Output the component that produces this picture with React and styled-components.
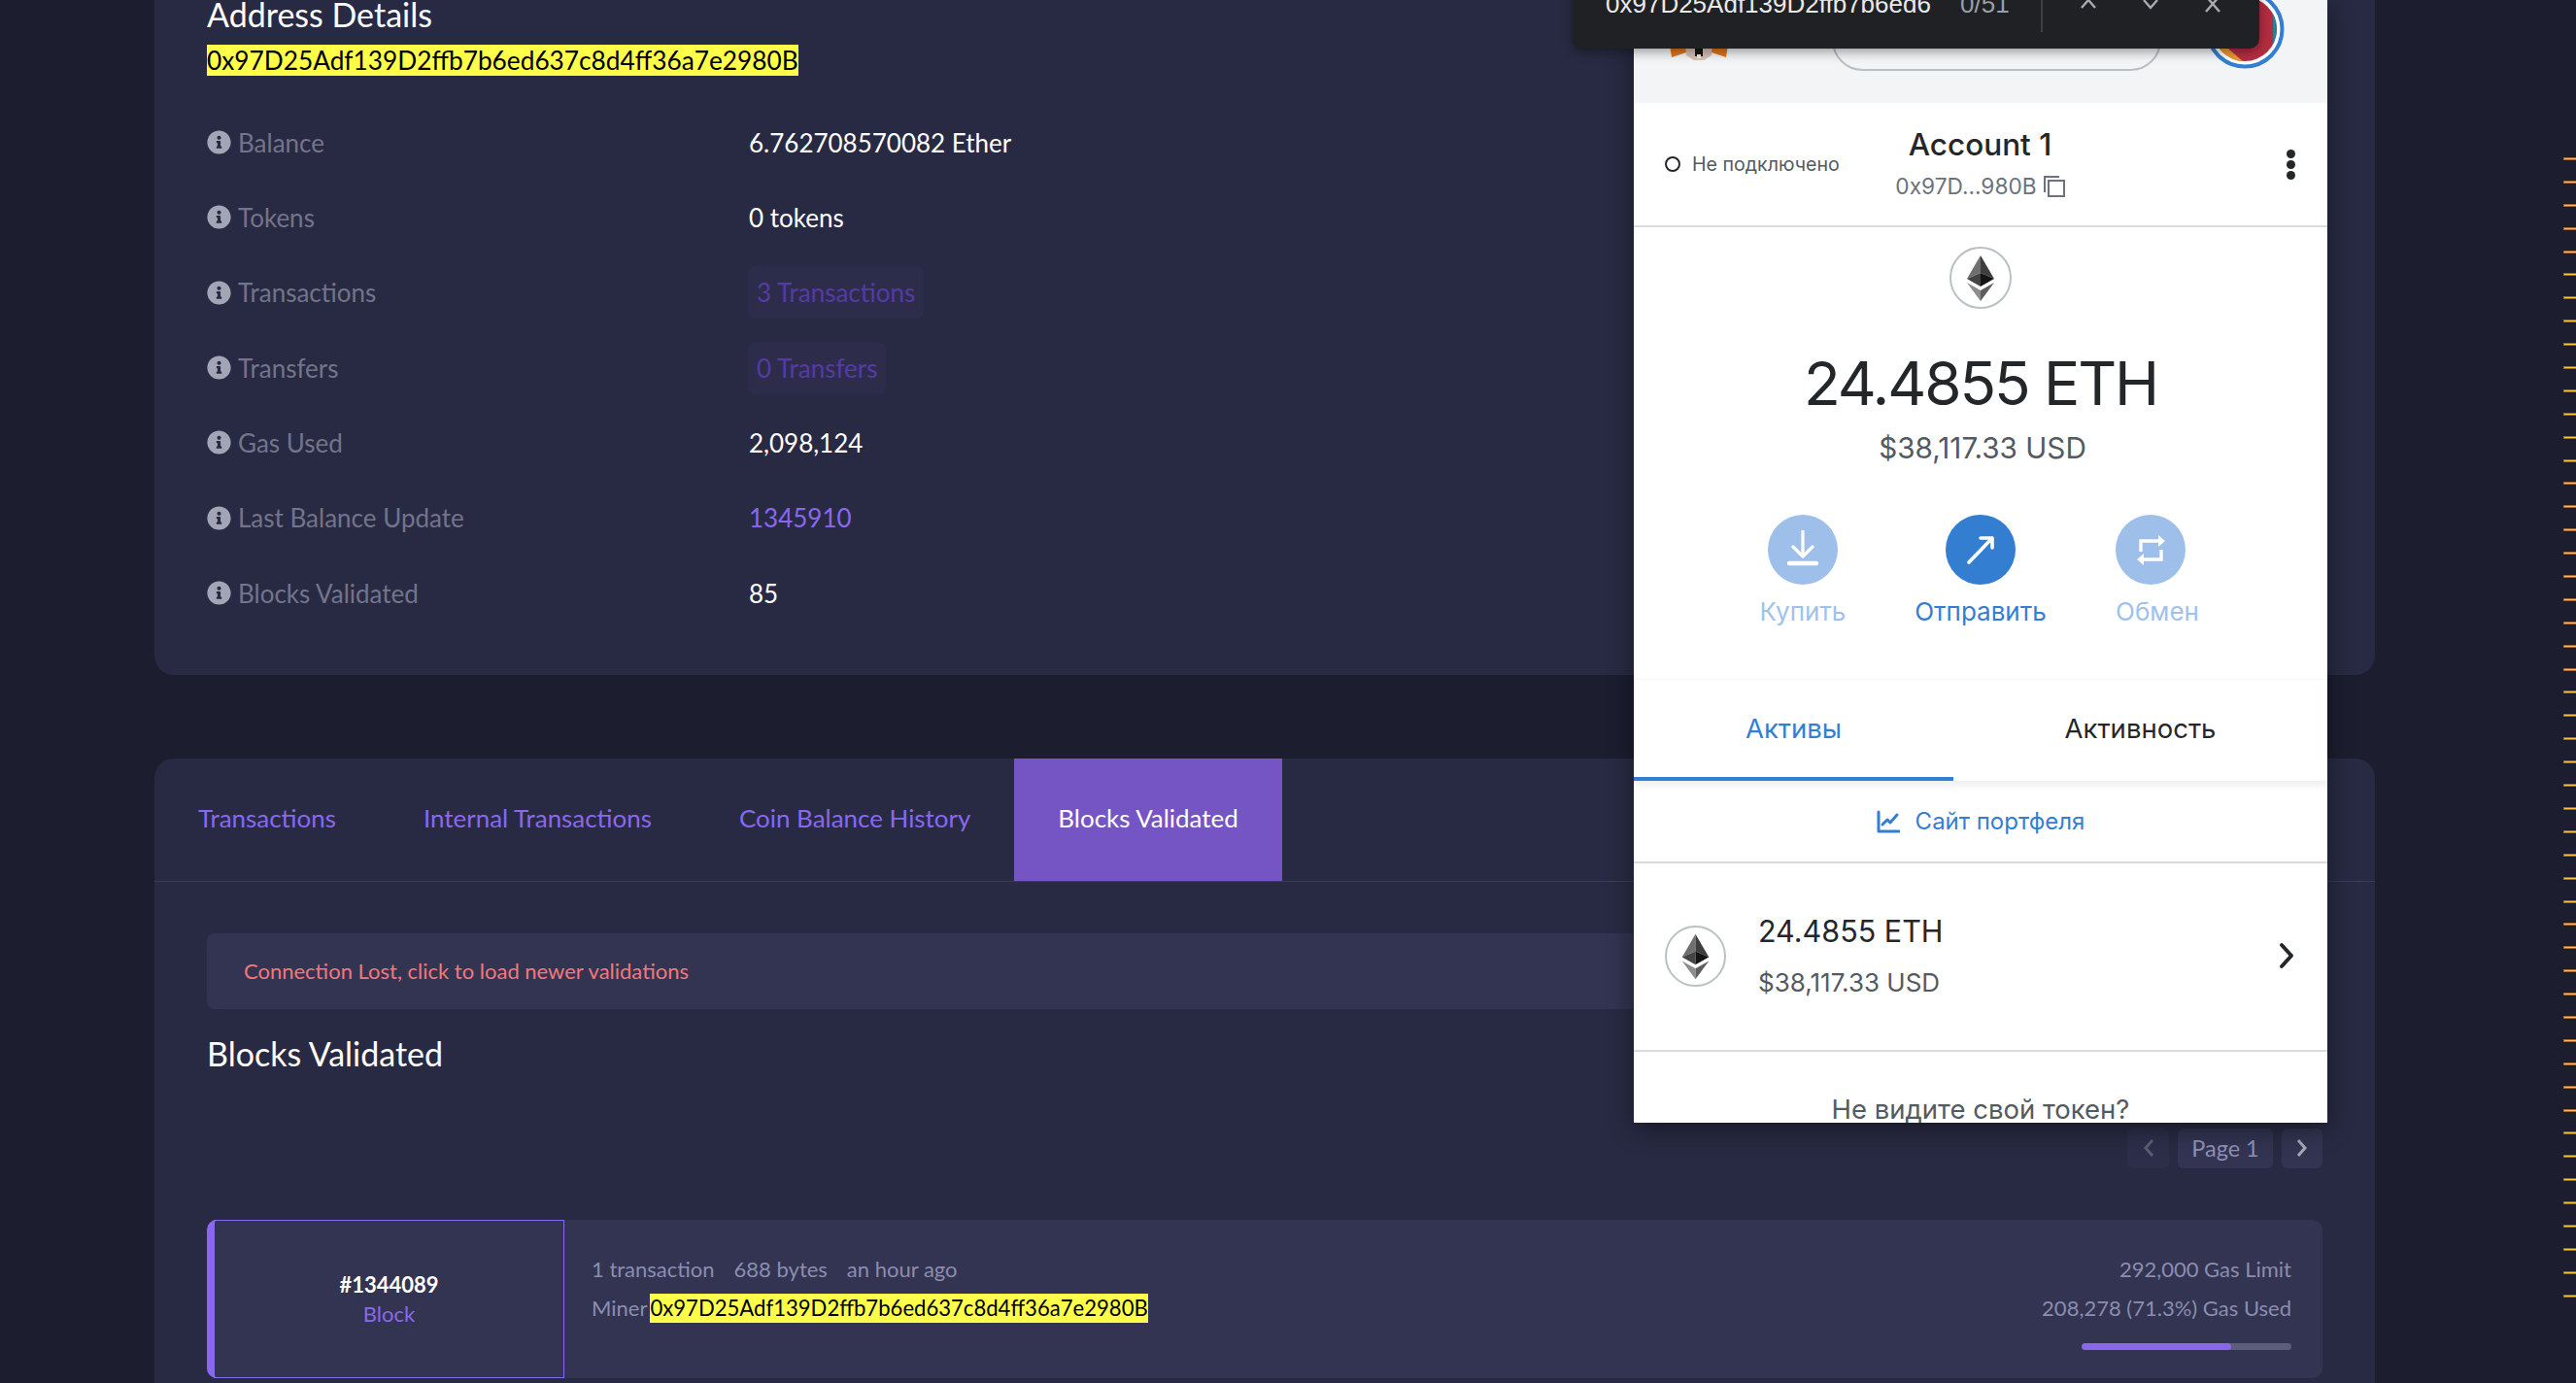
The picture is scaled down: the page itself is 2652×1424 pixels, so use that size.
import React from 'react';
import styled, { createGlobalStyle } from 'styled-components';
import { FaInfoCircle } from 'react-icons/fa';

const GlobalStyle = createGlobalStyle`
  html, body {
    margin: 0;
    height: 100%;
    background: #1c1d2f;
  }
  body {
    font-family: 'Lato', 'Noto Sans', sans-serif;
  }
`;

const Page = styled.div`
  position: relative;
  height: 1424px;
  overflow: hidden;
  padding: 0 207px 0 159px;
  box-sizing: border-box;
`;

const Card = styled.section`
  background: #282a43;
  border-radius: 20px;
`;

const DetailsCard = styled(Card)`
  margin-top: -40px;
  padding: 35px 54px 46px;
  border-radius: 0 0 20px 20px;
`;

const Heading = styled.h2`
  margin: 0;
  font-size: 34px;
  font-weight: 400;
  line-height: 40px;
  color: #fff;
`;

const Highlight = styled.mark`
  background: #ffff4a;
  color: #000;
  font-size: ${(p) => p.$size}px;
  line-height: ${(p) => p.$height}px;
  display: inline-block;
`;

const AddressLine = styled.div`
  margin: 11px 0 30px;
  height: 32px;
  line-height: 32px;
  display: flex;
`;

const Row = styled.div`
  display: grid;
  grid-template-columns: 558px 1fr;
  align-items: center;
  height: 77.33px;
  font-size: 26px;
`;

const Label = styled.div`
  display: flex;
  align-items: center;
  gap: 7px;
  color: #72748b;
  svg {
    color: #a3a5b6;
    width: 25px;
    height: 25px;
  }
`;

const Value = styled.div`
  color: ${(p) => (p.$link ? '#8a68ee' : '#fff')};
`;

const Pill = styled.span`
  display: inline-block;
  margin-left: -1px;
  padding: 0 9px;
  height: 54px;
  line-height: 54px;
  border-radius: 8px;
  background: #2d2d4b;
  color: #553aa3;
`;

const HistoryCard = styled(Card)`
  margin-top: 86px;
  height: 800px;
`;

const TabBar = styled.nav`
  display: flex;
  height: 126px;
  border-bottom: 1px solid #3b3d5a;
`;

const PageTab = styled.div`
  display: flex;
  align-items: center;
  padding: 0 45px 5px;
  font-size: 25.95px;
  color: ${(p) => (p.$active ? '#fff' : '#8a68ee')};
  background: ${(p) => (p.$active ? '#7554c4' : 'transparent')};
  border-radius: ${(p) => (p.$first ? '20px 0 0 0' : '0')};
`;

const HistoryBody = styled.div`
  padding: 53px 54px 0;
`;

const Alert = styled.div`
  display: flex;
  align-items: center;
  height: 78px;
  padding: 0 0 2px 38px;
  box-sizing: border-box;
  border-radius: 8px;
  background: #323451;
  color: #f4777c;
  font-size: 22px;
`;

const SectionTitle = styled(Heading)`
  margin-top: 26px;
`;

const Pagination = styled.div`
  display: flex;
  justify-content: flex-end;
  gap: 9px;
  margin-top: 57px;
  height: 41px;
`;

const PageBox = styled.div`
  display: flex;
  align-items: center;
  justify-content: center;
  width: ${(p) => p.$width}px;
  padding-bottom: 2px;
  border-radius: 6px;
  background: ${(p) => (p.$muted ? '#2d2e4a' : '#323451')};
  color: #8d90b8;
  font-size: 23.5px;
  svg {
    width: 14px;
    height: 22px;
    stroke: ${(p) => (p.$muted ? '#5b5d72' : '#a7a8b6')};
  }
`;

const BlockItem = styled.article`
  display: flex;
  margin-top: 53px;
  height: 163px;
  border-radius: 10px;
  background: #323451;
  border-left: 7px solid #8a68ee;
`;

const BlockTile = styled.div`
  display: flex;
  flex-direction: column;
  align-items: center;
  justify-content: center;
  gap: 8px;
  box-sizing: border-box;
  width: 361px;
  border: 1.5px solid #8a68ee;
  font-size: 22px;
  line-height: 22px;
`;

const BlockNumber = styled.div`
  color: #fff;
  font-weight: 700;
`;

const BlockKind = styled.div`
  color: #8a68ee;
`;

const BlockMain = styled.div`
  flex: 1;
  display: flex;
  justify-content: space-between;
  padding: 36px 32px 0 28px;
  font-size: 22px;
  color: #8b8db0;
`;

const MetaLine = styled.div`
  display: flex;
  gap: 20px;
  height: 30px;
  line-height: 30px;
`;

const MinerLine = styled.div`
  display: flex;
  gap: 3px;
  margin-top: 10px;
  height: 30px;
  line-height: 30px;
`;

const GasColumn = styled.div`
  display: flex;
  flex-direction: column;
  align-items: flex-end;
  gap: 10px;
  line-height: 30px;
`;

const GasBar = styled.div`
  width: 216px;
  height: 7px;
  margin-top: 11px;
  border-radius: 4px;
  background: #5c5e79;
  overflow: hidden;
`;

const GasFill = styled.div`
  height: 100%;
  border-radius: 4px;
  background: #8a68ee;
`;

const FindBar = styled.div`
  position: absolute;
  z-index: 3;
  top: -60px;
  left: 1619px;
  width: 707px;
  height: 110px;
  box-sizing: border-box;
  display: flex;
  align-items: center;
  padding: 18px 0 0 34px;
  background: #202124;
  border-radius: 0 0 10px 10px;
  box-shadow: 0 3px 12px rgba(0, 0, 0, 0.4);
  font-family: 'Liberation Sans', Arial, sans-serif;
  font-size: 26px;
`;

const FindText = styled.div`
  width: 365px;
  color: #e8eaed;
`;

const FindCount = styled.div`
  width: 83px;
  color: #9aa0a6;
`;

const FindDivider = styled.div`
  align-self: flex-end;
  width: 2px;
  height: 60px;
  margin: 0 15px 17px 0;
  background: #3f4043;
`;

const FindButton = styled.div`
  display: flex;
  justify-content: center;
  width: 64px;
  svg {
    width: 24px;
    height: 24px;
    stroke: #a8abaf;
    stroke-width: 2.4;
    fill: none;
  }
`;

const Wallet = styled.aside`
  position: absolute;
  z-index: 2;
  top: 0;
  left: 1682px;
  width: 714px;
  height: 1156px;
  overflow: hidden;
  background: #fff;
  box-shadow: 0 6px 24px rgba(0, 0, 0, 0.45);
  font-family: 'Inter', 'Noto Sans', sans-serif;
`;

const WalletHeader = styled.header`
  display: flex;
  align-items: flex-start;
  height: 106px;
  padding-left: 36px;
  background: #f2f4f6;
`;

const Fox = styled.svg`
  width: 62px;
  height: 62px;
  flex: none;
`;

const NetworkPill = styled.div`
  box-sizing: border-box;
  flex: none;
  width: 339px;
  height: 63px;
  margin: 10px 0 0 106px;
  border: 2px solid #bbc0c5;
  border-radius: 32px;
`;

const Avatar = styled.svg`
  flex: none;
  width: 82px;
  height: 82px;
  margin: -11px 0 0 45px;
`;

const AccountRow = styled.div`
  display: grid;
  grid-template-columns: 1fr auto 1fr;
  align-items: center;
  height: 126px;
  padding: 0 33px 0 32px;
  border-bottom: 2px solid #d9dbe0;
`;

const Status = styled.div`
  display: flex;
  align-items: center;
  gap: 12px;
  font-size: 19.6px;
  color: #535a61;
`;

const StatusRing = styled.span`
  box-sizing: border-box;
  width: 16px;
  height: 16px;
  border: 2px solid #24272a;
  border-radius: 50%;
`;

const AccountStack = styled.div`
  display: flex;
  flex-direction: column;
  align-items: center;
  gap: 8px;
  padding-bottom: 2px;
`;

const AccountName = styled.div`
  font-size: 31.5px;
  line-height: 40px;
  font-weight: 500;
  color: #24272a;
`;

const AccountAddress = styled.div`
  display: flex;
  align-items: center;
  gap: 7px;
  font-size: 22.7px;
  line-height: 30px;
  color: #6a737d;
`;

const Dots = styled.div`
  justify-self: end;
  display: flex;
  flex-direction: column;
  gap: 2px;
  span {
    width: 9px;
    height: 9px;
    border-radius: 50%;
    background: #24272a;
  }
`;

const Overview = styled.div`
  display: flex;
  flex-direction: column;
  align-items: center;
  padding-top: 20px;
`;

const EthBadge = styled.svg`
  display: block;
  flex: none;
  width: ${(p) => p.$size}px;
  height: ${(p) => p.$size}px;
`;

const Balance = styled.div`
  margin-top: 39px;
  font-size: 62px;
  letter-spacing: -2.1px;
  line-height: 76px;
  color: #24272a;
`;

const Fiat = styled.div`
  margin-top: 8px;
  padding-left: 4px;
  font-size: 29.7px;
  line-height: 40px;
  color: #535a61;
`;

const Actions = styled.div`
  display: flex;
  align-self: flex-start;
  margin: 49px 0 53px 94px;
`;

const Action = styled.div`
  display: flex;
  flex-direction: column;
  align-items: center;
  gap: 12px;
  width: 160px;
  margin-right: ${(p) => p.$gap}px;
  color: ${(p) => (p.$dim ? '#a0c2ea' : '#347ed2')};
  font-size: 26px;
  line-height: 32px;
`;

const ActionCircle = styled.div`
  display: flex;
  align-items: center;
  justify-content: center;
  width: 72px;
  height: 72px;
  border-radius: 50%;
  background: ${(p) => (p.$dim ? '#9dbfe9' : '#347ed2')};
  svg {
    width: 40px;
    height: 40px;
  }
`;

const ActionText = styled.div`
  padding-left: ${(p) => p.$shift || 0}px;
`;

const WalletTabs = styled.div`
  display: grid;
  grid-template-columns: 329px 1fr;
  height: 105px;
  border-top: 1px solid #f7f8f9;
  box-sizing: border-box;
  box-shadow: 0 4px 8px rgba(0, 0, 0, 0.08);
  position: relative;
`;

const WalletTab = styled.div`
  display: flex;
  align-items: center;
  justify-content: center;
  font-size: 27.5px;
  color: ${(p) => (p.$active ? '#347ed2' : '#24272a')};
  border-bottom: 4px solid ${(p) => (p.$active ? '#347ed2' : 'transparent')};
`;

const PortfolioLink = styled.div`
  display: flex;
  align-items: center;
  justify-content: center;
  gap: 16px;
  height: 85px;
  box-sizing: border-box;
  border-bottom: 2px solid #d9dbe0;
  font-size: 24px;
  color: #347ed2;
  svg {
    width: 24px;
    height: 24px;
  }
`;

const AssetRow = styled.div`
  display: flex;
  align-items: center;
  gap: 33px;
  height: 194px;
  padding: 0 33px 2px 32px;
  box-sizing: border-box;
  border-bottom: 2px solid #d9dbe0;
`;

const AssetText = styled.div`
  flex: 1;
  padding-top: 2px;
`;

const AssetAmount = styled.div`
  font-size: 30.5px;
  line-height: 40px;
  color: #24272a;
`;

const AssetFiat = styled.div`
  margin-top: 13px;
  font-size: 26px;
  line-height: 40px;
  color: #535a61;
`;

const TokenHint = styled.div`
  padding-top: 41px;
  text-align: center;
  font-size: 27.5px;
  line-height: 36px;
  color: #535a61;
`;

const Ticks = styled.div`
  position: absolute;
  z-index: 1;
  top: 162px;
  right: 0;
  display: flex;
  flex-direction: column;
  gap: 20.9px;
`;

const Tick = styled.div`
  box-sizing: border-box;
  width: 13px;
  height: 3px;
  background: #ffc23f;
  border: 1px solid #a4692b;
  border-right: 0;
`;

const EthMark = ({ size }) => (
  <EthBadge $size={size} viewBox="0 0 64 64">
    <circle cx="32" cy="32" r="31" fill="#fff" stroke="#bbc0c5" strokeWidth="2" />
    <polygon points="32,9 18,33 32,27" fill="#6f6f6f" />
    <polygon points="32,9 46,33 32,27" fill="#3e3e3e" />
    <polygon points="18,33 32,41 32,27" fill="#444" />
    <polygon points="46,33 32,41 32,27" fill="#141414" />
    <polygon points="18,37 32,56 32,45" fill="#8d8d8d" />
    <polygon points="46,37 32,56 32,45" fill="#5e5e5e" />
  </EthBadge>
);

const rows = [
  { label: 'Balance', value: '6.762708570082 Ether' },
  { label: 'Tokens', value: '0 tokens' },
  { label: 'Transactions', pill: '3 Transactions' },
  { label: 'Transfers', pill: '0 Transfers' },
  { label: 'Gas Used', value: '2,098,124' },
  { label: 'Last Balance Update', value: '1345910', link: true },
  { label: 'Blocks Validated', value: '85' },
];

const address = '0x97D25Adf139D2ffb7b6ed637c8d4ff36a7e2980B';

const App = () => (
  <>
    <GlobalStyle />
    <Page>
      <DetailsCard>
        <Heading>Address Details</Heading>
        <AddressLine>
          <Highlight $size={26.25} $height={32}>{address}</Highlight>
        </AddressLine>
        {rows.map((row) => (
          <Row key={row.label}>
            <Label>
              <FaInfoCircle />
              {row.label}
            </Label>
            <Value $link={row.link}>
              {row.pill ? <Pill>{row.pill}</Pill> : row.value}
            </Value>
          </Row>
        ))}
      </DetailsCard>

      <HistoryCard>
        <TabBar>
          <PageTab $first>Transactions</PageTab>
          <PageTab>Internal Transactions</PageTab>
          <PageTab>Coin Balance History</PageTab>
          <PageTab $active>Blocks Validated</PageTab>
        </TabBar>
        <HistoryBody>
          <Alert>Connection Lost, click to load newer validations</Alert>
          <SectionTitle>Blocks Validated</SectionTitle>
          <Pagination>
            <PageBox $width={43} $muted>
              <svg viewBox="0 0 14 22" fill="none" strokeWidth="3">
                <path d="M11 3 4 11l7 8" />
              </svg>
            </PageBox>
            <PageBox $width={98}>Page 1</PageBox>
            <PageBox $width={42}>
              <svg viewBox="0 0 14 22" fill="none" strokeWidth="3">
                <path d="M3 3l7 8-7 8" />
              </svg>
            </PageBox>
          </Pagination>
          <BlockItem>
            <BlockTile>
              <BlockNumber>#1344089</BlockNumber>
              <BlockKind>Block</BlockKind>
            </BlockTile>
            <BlockMain>
              <div>
                <MetaLine>
                  <span>1 transaction</span>
                  <span>688 bytes</span>
                  <span>an hour ago</span>
                </MetaLine>
                <MinerLine>
                  Miner
                  <Highlight $size={22.1} $height={30}>{address}</Highlight>
                </MinerLine>
              </div>
              <GasColumn>
                <span>292,000 Gas Limit</span>
                <span>208,278 (71.3%) Gas Used</span>
                <GasBar>
                  <GasFill style={{ width: '71.3%' }} />
                </GasBar>
              </GasColumn>
            </BlockMain>
          </BlockItem>
        </HistoryBody>
      </HistoryCard>

      <Wallet>
        <WalletHeader>
          <Fox viewBox="0 0 62 62">
            <polygon points="0,40 22,40 24,52 3,59" fill="#e2761b" />
            <polygon points="62,40 40,40 38,52 59,59" fill="#e2761b" />
            <polygon points="17,44 45,44 44,57 36,62 26,62 18,57" fill="#d7c1b3" />
            <polygon points="27,50 35,50 35,58 27,58" fill="#161616" />
            <polygon points="29,56 33,56 33,60 29,60" fill="#f0e8e0" />
          </Fox>
          <NetworkPill />
          <Avatar viewBox="0 0 82 82">
            <defs>
              <clipPath id="jazz">
                <circle cx="41" cy="41" r="33" />
              </clipPath>
            </defs>
            <circle cx="41" cy="41" r="38.5" fill="#fff" stroke="#347ed2" strokeWidth="4" />
            <g clipPath="url(#jazz)">
              <rect width="82" height="82" fill="#b52d40" />
              <polygon points="0,40 48,82 0,82" fill="#ee9a2e" />
              <polygon points="70,10 82,10 82,60 70,60" fill="#2c7f90" />
            </g>
          </Avatar>
        </WalletHeader>

        <AccountRow>
          <Status>
            <StatusRing />
            Не подключено
          </Status>
          <AccountStack>
            <AccountName>Account 1</AccountName>
            <AccountAddress>
              0x97D...980B
              <svg width="22" height="22" viewBox="0 0 22 22" fill="none" stroke="#6a737d" strokeWidth="2">
                <path d="M1 17V1h15" />
                <rect x="5" y="5" width="16" height="16" />
              </svg>
            </AccountAddress>
          </AccountStack>
          <Dots>
            <span />
            <span />
            <span />
          </Dots>
        </AccountRow>

        <Overview>
          <EthMark size={64} />
          <Balance>24.4855 ETH</Balance>
          <Fiat>$38,117.33 USD</Fiat>
          <Actions>
            <Action $dim $gap={23}>
              <ActionCircle $dim>
                <svg viewBox="-2 -2 40 40" fill="none" stroke="#fff" strokeWidth="3.2" strokeLinecap="round" strokeLinejoin="round">
                  <path d="M18 -1v25M8 15l10 10 10-10" />
                  <path d="M4 32h28" strokeWidth="4.4" />
                </svg>
              </ActionCircle>
              <ActionText>Купить</ActionText>
            </Action>
            <Action $gap={15}>
              <ActionCircle>
                <svg viewBox="-2 -2 40 40" fill="none" stroke="#fff" strokeWidth="3.6" strokeLinecap="round" strokeLinejoin="round">
                  <path d="M6 31 30 6M18 6h12v10" />
                </svg>
              </ActionCircle>
              <ActionText>Отправить</ActionText>
            </Action>
            <Action $dim $gap={0}>
              <ActionCircle $dim>
                <svg viewBox="-2 -2 40 40" fill="none" stroke="#fff" strokeWidth="3.4">
                  <path d="M8 20V9h19M29 18v10H10" />
                  <path d="M26 3l7 6-7 6zM11 22l-7 6 7 6z" fill="#fff" stroke="none" />
                </svg>
              </ActionCircle>
              <ActionText $shift={14}>Обмен</ActionText>
            </Action>
          </Actions>
        </Overview>

        <WalletTabs>
          <WalletTab $active>Активы</WalletTab>
          <WalletTab>Активность</WalletTab>
        </WalletTabs>

        <PortfolioLink>
          <svg viewBox="0 0 24 24" fill="none" stroke="#347ed2" strokeWidth="3" strokeLinecap="round" strokeLinejoin="round">
            <path d="M2 2v20h21" />
            <path d="M6 15l5-5 3 3 7-8" />
          </svg>
          Сайт портфеля
        </PortfolioLink>

        <AssetRow>
          <EthMark size={63} />
          <AssetText>
            <AssetAmount>24.4855 ETH</AssetAmount>
            <AssetFiat>$38,117.33 USD</AssetFiat>
          </AssetText>
          <svg width="18" height="28" viewBox="0 0 18 28" fill="none" stroke="#24272a" strokeWidth="4" strokeLinecap="round" strokeLinejoin="round">
            <path d="M4 3l10 11L4 25" />
          </svg>
        </AssetRow>

        <TokenHint>Не видите свой токен?</TokenHint>
      </Wallet>

      <FindBar>
        <FindText>0x97D25Adf139D2ffb7b6ed6</FindText>
        <FindCount>0/51</FindCount>
        <FindDivider />
        <FindButton>
          <svg viewBox="0 0 24 24"><path d="M5 16l7-8 7 8" /></svg>
        </FindButton>
        <FindButton>
          <svg viewBox="0 0 24 24"><path d="M5 8l7 8 7-8" /></svg>
        </FindButton>
        <FindButton>
          <svg viewBox="0 0 24 24"><path d="M5 4l14 16M19 4 5 20" /></svg>
        </FindButton>
      </FindBar>

      <Ticks>
        {Array.from({ length: 50 }, (_, i) => (
          <Tick key={i} />
        ))}
      </Ticks>
    </Page>
  </>
);

export default App;
